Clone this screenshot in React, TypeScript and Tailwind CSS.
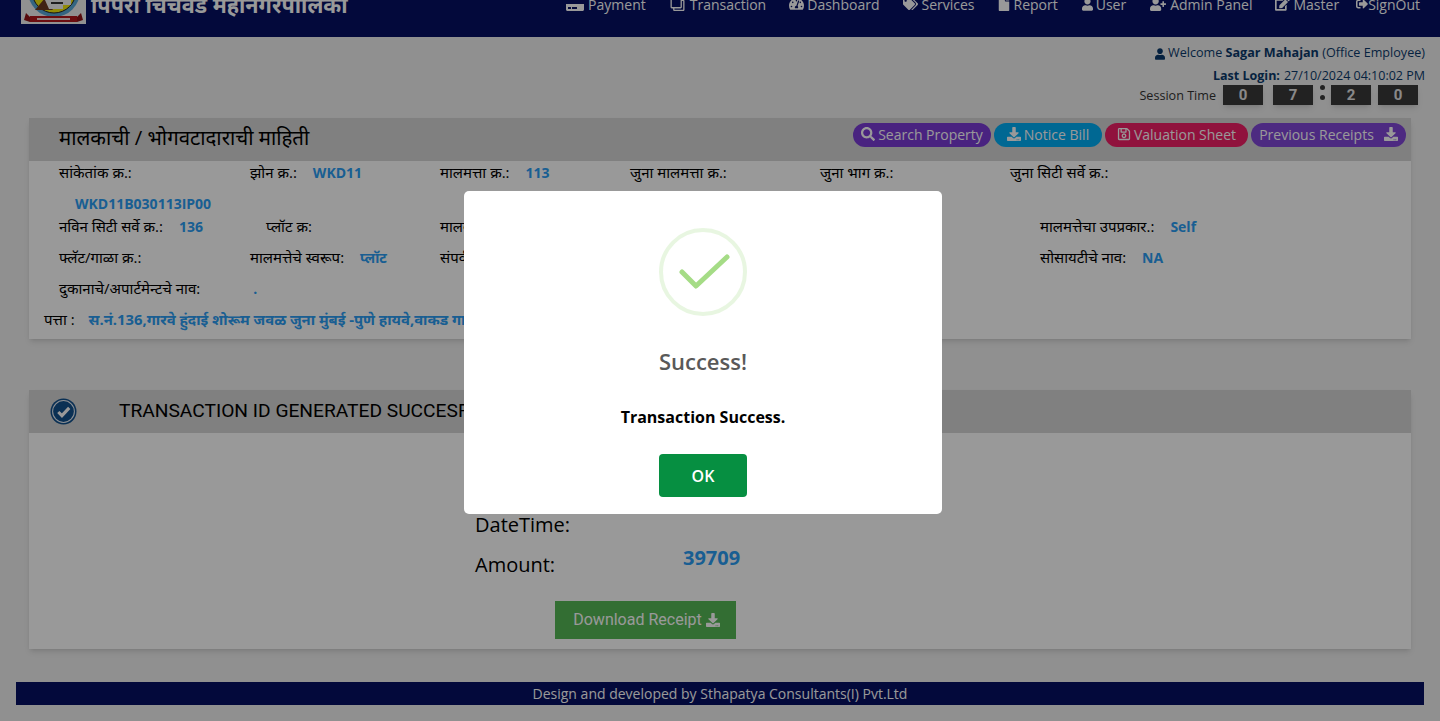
import { FaCreditCard, FaRegClone, FaTachometerAlt, FaTags, FaFile, FaUser, FaUserPlus, FaEdit, FaSignOutAlt, FaSearch, FaDownload, FaRegSave } from "react-icons/fa";
import type { ReactNode } from "react";

const navItems = [
  { label: "Payment", icon: <FaCreditCard className="h-[16px] w-[18px]" />, gap: "gap-1", mr: "mr-6" },
  { label: "Transaction", icon: <FaRegClone className="h-[14px] w-[15px] -scale-x-100" />, gap: "gap-[5px]", mr: "mr-[23px]" },
  { label: "Dashboard", icon: <FaTachometerAlt className="h-[14px] w-[15px]" />, gap: "gap-[3px]", mr: "mr-6" },
  { label: "Services", icon: <FaTags className="h-[14px] w-[15px]" />, gap: "gap-[3px]", mr: "mr-[23px]" },
  { label: "Report", icon: <FaFile className="h-[14px] w-[12px]" />, gap: "gap-1", mr: "mr-6" },
  { label: "User", icon: <FaUser className="h-[13px] w-[11px]" />, gap: "gap-[3px]", mr: "mr-6" },
  { label: "Admin Panel", icon: <FaUserPlus className="h-[13px] w-[16px]" />, gap: "gap-1", mr: "mr-[22px]" },
  { label: "Master", icon: <FaEdit className="h-[14px] w-[15px]" />, gap: "gap-1", mr: "mr-[17px]" },
  { label: "SignOut", icon: <FaSignOutAlt className="h-[12px] w-[12px]" />, gap: "gap-0", mr: "mr-0" },
];

function Field({ label, value, className }: { label: string; value?: string; className: string }) {
  return (
    <div className={`flex h-[22px] items-center whitespace-nowrap ${className}`}>
      <span className="text-[15px] text-black">{label}</span>
      {value && <span className="ml-4 text-[14px] font-bold text-[#2a9df4]">{value}</span>}
    </div>
  );
}

function Pill({ children, className }: { children: ReactNode; className: string }) {
  return (
    <button className={`flex h-6 items-center justify-center rounded-full pb-[2px] text-[14px] text-white ${className}`}>
      {children}
    </button>
  );
}

function Digit({ value, className }: { value: string; className: string }) {
  return (
    <div className={`flex h-5 w-10 items-center justify-center bg-[#3a3a3a] font-['Roboto',sans-serif] text-[15px] font-bold text-[#e5e5e5] shadow-md ${className}`}>
      {value}
    </div>
  );
}

function Logo() {
  return (
    <svg viewBox="0 0 65 60" className="h-[60px] w-[65px]">
      <rect width="65" height="60" fill="#f2f2f2" />
      <circle cx="33" cy="27" r="26" fill="#58a8d8" />
      <circle cx="33" cy="27" r="22" fill="#f0e80e" stroke="#222" strokeWidth="1" />
      <path d="M14 46 L24 34 L32 46 Z" fill="#6b3a20" />
      <path d="M24 36 h26 v5 h-8 v4 h-14 z" fill="#f5f5f5" />
      <path d="M30 38 h12 v2 h-12 z" fill="#333" />
      <path d="M5 49 l4 4 v5 l-6 -2 z" fill="#8f1216" />
      <path d="M60 49 l-4 4 v5 l6 -2 z" fill="#8f1216" />
      <path d="M9 52 h47 v6 h-47 z" fill="#b3161b" />
      <path d="M16 54 h33 v2 h-33 z" fill="#f3d9d9" />
    </svg>
  );
}

export default function App() {
  return (
    <div className="relative h-[721px] overflow-hidden bg-[#f0f0f0] font-['Open_Sans','Noto_Sans','Noto_Sans_Devanagari',sans-serif]">
      <header className="flex h-[37px] items-start justify-between overflow-hidden bg-[#050f63] pl-[21px] pr-5">
        <div className="-mt-9 flex items-start">
          <Logo />
          <h1 className="ml-[5px] mt-[30px] text-[21.6px] font-bold leading-[22px] whitespace-nowrap text-white">पिंपरी चिंचवड महानगरपालिका</h1>
        </div>
        <nav className="-mt-[7px] flex">
          {navItems.map((item) => (
            <div key={item.label} className={`flex h-[22px] items-center text-[14px] text-white ${item.gap} ${item.mr}`}>
              {item.icon}
              <span>{item.label}</span>
            </div>
          ))}
        </nav>
      </header>

      <div className="h-[81px] pr-[15px] text-[#0b3a6b]">
        <div className="flex h-[27px] items-end justify-end pb-[1px] text-[12.6px]">
          <FaUser className="mb-[3px] mr-[3px] h-3 w-[10px]" />
          <span>Welcome <b>Sagar Mahajan</b> (Office Employee)</span>
        </div>
        <div className="flex h-[22px] items-end justify-end text-[12.5px]">
          <b className="mr-1">Last Login:</b> 27/10/2024 04:10:02 PM
        </div>
        <div className="-mt-[1px] flex h-5 items-center justify-end pr-[7px] text-[12.6px] text-[#333]">
          <span className="mr-[7px] mt-[2px]">Session Time</span>
          <Digit value="0" className="mr-[10px]" />
          <Digit value="7" className="" />
          <div className="flex w-[18px] flex-col items-center gap-[5px] self-start">
            <span className="h-[5px] w-[5px] rounded-full bg-[#3a3a3a]" />
            <span className="h-[5px] w-[5px] rounded-full bg-[#3a3a3a]" />
          </div>
          <Digit value="2" className="mr-[7px]" />
          <Digit value="0" className="" />
        </div>
      </div>

      <section className="mx-[29px] h-[221px] bg-white shadow-md">
        <div className="flex h-[43px] items-start justify-between bg-[#d5d5d5] pl-[30px] pr-[5px]">
          <h2 className="mt-[6px] text-[20.4px] leading-[26px] text-black">मालकाची / भोगवटादाराची माहिती</h2>
          <div className="mt-[5px] flex gap-[3px]">
            <Pill className="w-[138px] gap-[3px] bg-[#7a3bd6]"><FaSearch className="h-[14px] w-[14px]" />Search Property</Pill>
            <Pill className="w-[108px] gap-[3px] bg-[#00aef5] text-[14.6px]"><FaDownload className="h-[14px] w-[14px]" />Notice Bill</Pill>
            <Pill className="w-[143px] gap-[3px] bg-[#f01e66]"><FaRegSave className="h-[14px] w-[14px]" />Valuation Sheet</Pill>
            <Pill className="w-[155px] gap-[10px] bg-[#8046d8]">Previous Receipts<FaDownload className="h-[14px] w-[14px]" /></Pill>
          </div>
        </div>

        <div className="pl-[30px]">
          <div className="grid grid-cols-[191px_190px_190px_190px_190px_200px]">
            <Field label="सांकेतांक क्र.:" className="" />
            <Field label="झोन क्र.:" value="WKD11" className="" />
            <Field label="मालमत्ता क्र.:" value="113" className="" />
            <Field label="जुना मालमत्ता क्र.:" className="" />
            <Field label="जुना भाग क्र.:" className="" />
            <Field label="जुना सिटी सर्वे क्र.:" className="" />
          </div>
          <div className="mt-[10px] h-[22px] pl-4 text-[14px] font-bold leading-[22px] text-[#2a9df4]">WKD11B030113IP00</div>
          <div className="grid grid-cols-[207px_174px_430px_170px]">
            <Field label="नविन सिटी सर्वे क्र.:" value="136" className="" />
            <Field label="प्लॉट क्र:" className="" />
            <Field label="मालकाचे नाव:" className="" />
            <Field label="मालमत्तेचा उपप्रकार.:" value="Self" className="ml-[170px]" />
          </div>
          <div className="mt-[9px] grid grid-cols-[191px_190px_600px_170px]">
            <Field label="फ्लॅट/गाळा क्र.:" className="" />
            <Field label="मालमत्तेचे स्वरूप:" value="प्लॉट" className="" />
            <Field label="संपर्क क्र.:" className="" />
            <Field label="सोसायटीचे नाव:" value="NA" className="" />
          </div>
          <Field label="दुकानाचे/अपार्टमेन्टचे नाव:" value="." className="mt-[9px] [&>span:last-child]:ml-[53px]" />
          <div className="-ml-[15px] mt-[9px] flex h-[22px] items-center whitespace-nowrap">
            <span className="text-[15px] text-black">पत्ता :</span>
            <span className="ml-[14px] text-[14.8px] font-bold text-[#2a9df4]">स.नं.136,गारवे हुंदाई शोरूम जवळ जुना मुंबई -पुणे हायवे,वाकड गाव</span>
          </div>
        </div>
      </section>

      <section className="mx-[29px] mt-[51px] h-[259px] bg-white shadow-md">
        <div className="flex h-[43px] items-center bg-[#d5d5d5] pl-[21px]">
          <svg viewBox="0 0 26 26" className="h-[27px] w-[27px]">
            <circle cx="13" cy="13" r="12.5" fill="#12508c" />
            <circle cx="13" cy="13" r="10.5" fill="#12508c" stroke="#e8eef5" strokeWidth="1" />
            <path d="M8 13.5 L11.5 17 L18.5 9.5" fill="none" stroke="#fff" strokeWidth="3" />
          </svg>
          <h3 className="mb-[1px] ml-[42px] whitespace-nowrap font-['Roboto',sans-serif] text-[19.2px] text-black">TRANSACTION ID GENERATED SUCCESFULLY</h3>
        </div>
        <div className="pl-[446px] pt-8">
          <div className="flex h-10 items-center text-[20px] text-black">Transaction Id:</div>
          <div className="flex h-10 items-center text-[20px] text-black">DateTime:</div>
          <div className="flex h-10 items-center text-[20px] text-black">
            <span className="w-[208px]">Amount:</span>
            <span className="-mt-[14px] font-bold text-[#2a9df4]">39709</span>
          </div>
          <button className="ml-20 mt-4 flex h-[38px] w-[181px] items-center justify-center gap-1 bg-[#55b755] pl-[2px] font-['Roboto',sans-serif] text-[16px] text-white">
            Download Receipt <FaDownload className="h-[14px] w-[14px]" />
          </button>
        </div>
      </section>

      <footer className="mx-4 mt-[33px] flex h-[23px] items-center justify-center bg-[#050f63] text-[14px] text-white">
        Design and developed by Sthapatya Consultants(I) Pvt.Ltd
      </footer>

      <div className="absolute inset-0 flex items-start justify-center bg-black/40 pr-[34px] pt-[191px]">
        <div className="flex h-[323px] w-[478px] flex-col items-center rounded-[5px] bg-white pt-[37px]">
          <svg viewBox="0 0 88 88" className="h-[88px] w-[88px]">
            <circle cx="44" cy="44" r="42" fill="none" stroke="#a5dc86" strokeOpacity="0.25" strokeWidth="4" />
            <path d="M23 44 L37 58 L68 29" fill="none" stroke="#a5dc86" strokeWidth="5" strokeLinecap="round" strokeLinejoin="round" />
          </svg>
          <h2 className="mt-[29px] text-[22px] leading-[32px] font-semibold text-[#595959]">Success!</h2>
          <p className="mt-[29px] text-[16px] leading-[22px] font-bold text-black">Transaction Success.</p>
          <button className="mt-[26px] h-[43px] w-[88px] rounded-[4px] bg-[#068f41] text-[16px] font-semibold text-white">OK</button>
        </div>
      </div>
    </div>
  );
}
